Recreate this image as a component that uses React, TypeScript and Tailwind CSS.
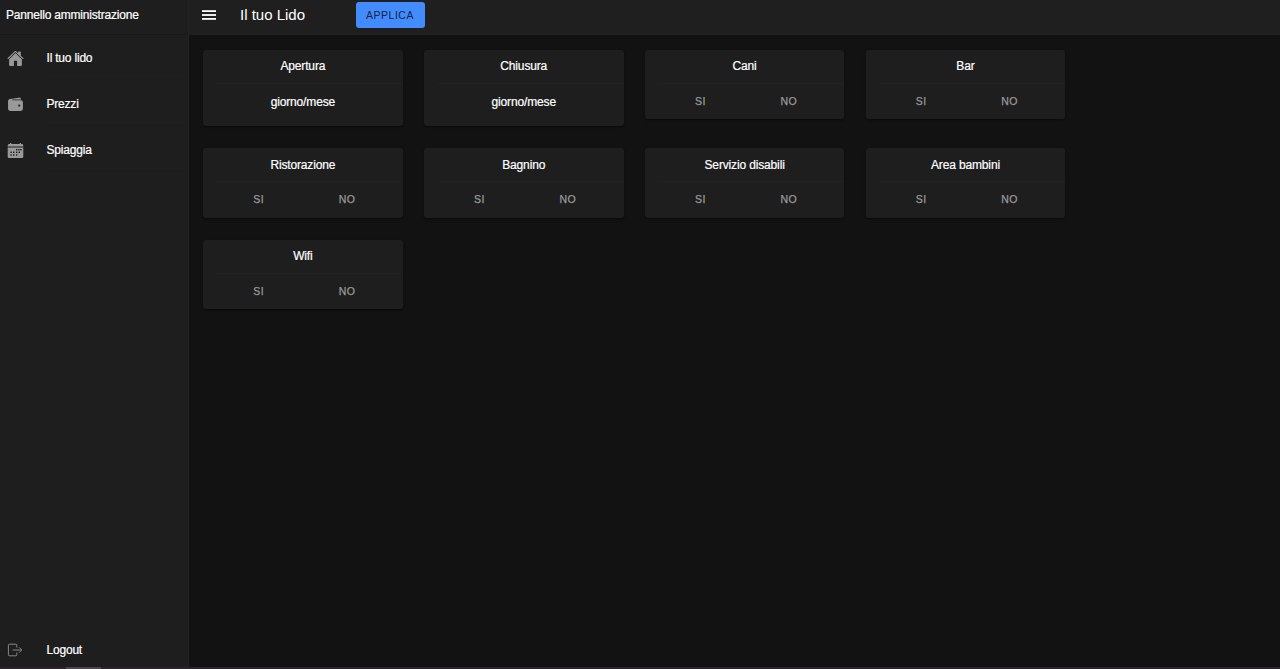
import type { ReactNode } from "react";
import { IoHome, IoWallet } from "react-icons/io5";

const services = ["Cani", "Bar", "Ristorazione", "Bagnino", "Servizio disabili", "Area bambini", "Wifi"];

function CalendarIcon() {
  return (
    <svg className="h-[17px] w-[17px]" viewBox="0 0 17 17" fill="currentColor">
      <path d="M3 1h1.3v1h8.4V1H14v1h.6c1 0 1.7.7 1.7 1.6v.8H.7v-.8C.7 2.700 1.400 2 2.400 2H3z" />
      <path d="M.7 5.400h15.600v9c0 1-.7 1.700-1.700 1.700H2.400c-1 0-1.700-.7-1.700-1.700z" />
      <g fill="#1e1e1e">
        <rect x="9" y="7" width="1.4" height="1.4" />
        <rect x="11.2" y="7" width="1.4" height="1.4" />
        <rect x="13.200" y="7" width="1.400" height="1.400" />
        <rect x="3.400" y="9.600" width="1.400" height="1.400" />
        <rect x="6" y="9.600" width="1.400" height="1.400" />
        <rect x="9" y="9.600" width="1.400" height="1.400" />
        <rect x="11.600" y="9.600" width="1.400" height="1.400" />
        <rect x="3.400" y="12.300" width="1.400" height="1.400" />
        <rect x="6" y="12.300" width="1.400" height="1.400" />
        <rect x="9" y="12.300" width="1.400" height="1.400" />
      </g>
    </svg>
  );
}

function ExitIcon() {
  return (
    <svg className="h-[16px] w-[16px]" viewBox="0 0 16 16" fill="none" stroke="currentColor" strokeWidth="1">
      <path d="M9.800 5.500V3.200a1 1 0 0 0-1-1H2.400a1 1 0 0 0-1 1v9.600a1 1 0 0 0 1 1h6.400a1 1 0 0 0 1-1v-2.300M5.500 8h9M12 5.300 14.700 8 12 10.700" />
    </svg>
  );
}

function Card({ title, children }: { title: string; children: ReactNode }) {
  return (
    <section className="overflow-hidden rounded-[3px] bg-[#1e1e1e] shadow-[0_2px_1px_-1px_rgba(0,0,0,0.2),0_1px_1px_rgba(0,0,0,0.14),0_1px_3px_rgba(0,0,0,0.12)]">
      <h2 className="ml-[13px] flex h-[34px] items-center justify-center border-b border-[#212121] pr-[13px] text-[12px] tracking-[-0.15px] text-white [-webkit-text-stroke:0.2px_white]">
        {title}
      </h2>
      {children}
    </section>
  );
}

function DateCard({ title }: { title: string }) {
  return (
    <Card title={title}>
      <div className="flex h-[42.5px] items-start justify-center pt-[8px] text-[12px] leading-[20px] tracking-[-0.15px] text-white [-webkit-text-stroke:0.2px_white]">
        giorno/mese
      </div>
    </Card>
  );
}

function ChoiceCard({ title }: { title: string }) {
  return (
    <Card title={title}>
      <div className="grid h-[35.5px] grid-cols-2 px-[11.5px] pt-[1px] text-[10.5px] tracking-[0.5px] text-[#999999] [-webkit-text-stroke:0.25px_#999999]">
        <button>SI</button>
        <button>NO</button>
      </div>
    </Card>
  );
}

function MenuItem({ icon, label }: { icon: ReactNode; label: string }) {
  return (
    <a className="flex h-[46px] items-center pl-[6.5px]">
      <span className="w-[40px] text-[17px] text-[#999999]">{icon}</span>
      <span className="flex h-[42px] flex-1 items-center self-start border-b border-[#202020] pt-[5px] text-[12px] tracking-[-0.2px] text-white [-webkit-text-stroke:0.2px_white]">
        {label}
      </span>
    </a>
  );
}

export default function App() {
  return (
    <div className="flex h-[669px] w-[1280px] flex-col overflow-hidden bg-[#121212] font-['Liberation_Sans',Arial,sans-serif]">
      <div className="flex min-h-0 flex-1">
        <aside className="flex w-[189px] shrink-0 flex-col border-r border-[#222222] bg-[#1e1e1e]">
          <div className="flex h-[35px] shrink-0 items-center border-b border-[#191919] pb-[4px] pl-[6px] text-[12px] tracking-[-0.2px] text-white [-webkit-text-stroke:0.2px_white]">
            Pannello amministrazione
          </div>
          <nav>
            <MenuItem icon={<IoHome />} label="Il tuo lido" />
            <MenuItem icon={<IoWallet />} label="Prezzi" />
            <MenuItem icon={<CalendarIcon />} label="Spiaggia" />
          </nav>
          <a className="mt-auto flex h-[35px] items-center pl-[6.5px]">
            <span className="w-[40px] text-[#888888]">
              <ExitIcon />
            </span>
            <span className="text-[12px] tracking-[-0.2px] text-white [-webkit-text-stroke:0.2px_white]">Logout</span>
          </a>
        </aside>
        <main className="flex-1">
          <header className="flex h-[35px] items-center bg-[#1f1f1f] pb-[5px] pl-[13px]">
            <svg className="h-[10px] w-[14px] fill-white" viewBox="0 0 14 10">
              <rect width="14" height="1.8" y="0.2" />
              <rect width="14" height="1.8" y="4.1" />
              <rect width="14" height="1.8" y="8" />
            </svg>
            <h1 className="w-[115px] pb-[2px] pl-[24px] text-[15px] leading-none text-white">
              <span className="whitespace-nowrap">Il tuo Lido</span>
            </h1>
            <button className="ml-[24.5px] h-[26px] w-[69px] rounded-[3px] bg-[#428cff] pt-[1px] text-[10.5px] tracking-[0.5px] text-[#17243c]">
              APPLICA
            </button>
          </header>
          <div className="grid grid-cols-[repeat(4,199.700px)] items-start gap-x-[21.200px] gap-y-[22px] pt-[14.500px] pl-[14px]">
            <DateCard title="Apertura" />
            <DateCard title="Chiusura" />
            {services.map((title) => (
              <ChoiceCard key={title} title={title} />
            ))}
          </div>
        </main>
      </div>
      <footer className="h-[2px] bg-[#2c222c]">
        <div className="ml-[66px] h-full w-[35px] bg-[#4c444c]" />
      </footer>
    </div>
  );
}
